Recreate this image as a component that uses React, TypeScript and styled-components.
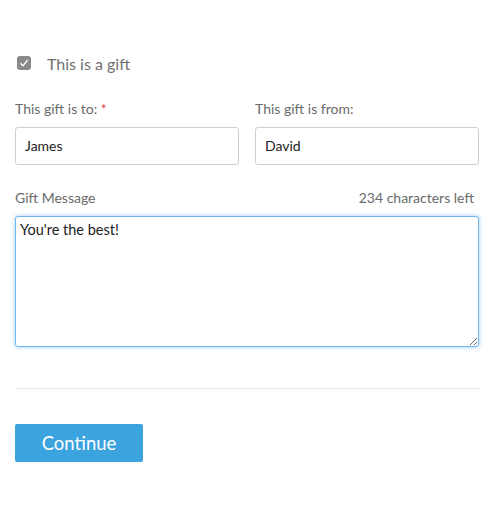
import React, { useState } from 'react'
import styled, { createGlobalStyle } from 'styled-components'

const GlobalStyle = createGlobalStyle`
  html, body {
    margin: 0;
    padding: 0;
    background: #ffffff;
  }
  body {
    font-family: Lato, 'Noto Sans', Arial, sans-serif;
  }
`

const Wrapper = styled.div`
  box-sizing: border-box;
  width: 495px;
  padding: 44px 16px 0 15px;
`

const GiftRow = styled.label`
  display: flex;
  align-items: center;
  gap: 16px;
  height: 38px;
  padding-left: 2px;
  cursor: pointer;
`

const Box = styled.span<{ checked: boolean }>`
  display: flex;
  align-items: center;
  justify-content: center;
  width: 14px;
  height: 14px;
  border-radius: 3px;
  background: ${(props) => (props.checked ? '#8a8a8a' : '#ffffff')};
  border: ${(props) => (props.checked ? 'none' : '1px solid #bbb')};
`

const GiftText = styled.span`
  font-size: 16px;
  color: #6f6f6f;
`

const Fields = styled.div`
  display: grid;
  grid-template-columns: 1fr 1fr;
  gap: 16px;
  margin-top: 17px;
`

const Field = styled.div`
  display: flex;
  flex-direction: column;
`

const Label = styled.div`
  display: flex;
  justify-content: space-between;
  font-size: 14px;
  line-height: 19px;
  color: #6a6a6a;
  height: 19px;
  margin-bottom: 9px;
`

const Counter = styled.span`
  padding-right: 5px;
`

const Required = styled.span`
  color: #e8453c;
`

const Input = styled.input`
  box-sizing: border-box;
  height: 38px;
  width: 100%;
  border: 1px solid #cfcfcf;
  border-radius: 3px;
  padding: 0 9px 2px;
  font-family: inherit;
  font-size: 14px;
  color: #222;
  outline: none;
`

const MessageBlock = styled.div`
  margin-top: 23px;
`

const TextArea = styled.textarea`
  box-sizing: border-box;
  display: block;
  width: 100%;
  height: 131px;
  border: 1px solid #6fb6f2;
  border-radius: 3px;
  box-shadow: 0 0 4px rgba(90, 170, 240, 0.6);
  padding: 4px 4px;
  font-family: inherit;
  font-size: 14.5px;
  color: #222;
  outline: none;
  resize: vertical;
`

const Divider = styled.hr`
  border: none;
  border-top: 1px solid #e4e4e4;
  margin: 41px 0 35px;
`

const Button = styled.button`
  width: 128px;
  height: 38px;
  border: none;
  border-radius: 2px;
  background: #3ba3de;
  color: #ffffff;
  font-family: inherit;
  font-size: 18.5px;
  cursor: pointer;
`

const App = () => {
  const [isGift, setIsGift] = useState(true)
  const [message, setMessage] = useState("You're the best!")
  return (
    <Wrapper>
      <GlobalStyle />
      <GiftRow onClick={() => setIsGift(!isGift)}>
        <Box checked={isGift}>
          {isGift ? (
            <svg width="10" height="10" viewBox="0 0 10 10">
              <path d="M1.5 5.2 L4 7.8 L8.6 2" fill="none" stroke="#fff" strokeWidth="1.3" />
            </svg>
          ) : null}
        </Box>
        <GiftText>This is a gift</GiftText>
      </GiftRow>
      <Fields>
        <Field>
          <Label>
            <span>
              This gift is to: <Required>*</Required>
            </span>
          </Label>
          <Input defaultValue="James" />
        </Field>
        <Field>
          <Label>
            <span>This gift is from:</span>
          </Label>
          <Input defaultValue="David" />
        </Field>
      </Fields>
      <MessageBlock>
        <Label>
          <span>Gift Message</span>
          <Counter>{250 - message.length} characters left</Counter>
        </Label>
        <TextArea value={message} onChange={(e) => setMessage(e.target.value)} />
      </MessageBlock>
      <Divider />
      <Button>Continue</Button>
    </Wrapper>
  )
}

export default App
